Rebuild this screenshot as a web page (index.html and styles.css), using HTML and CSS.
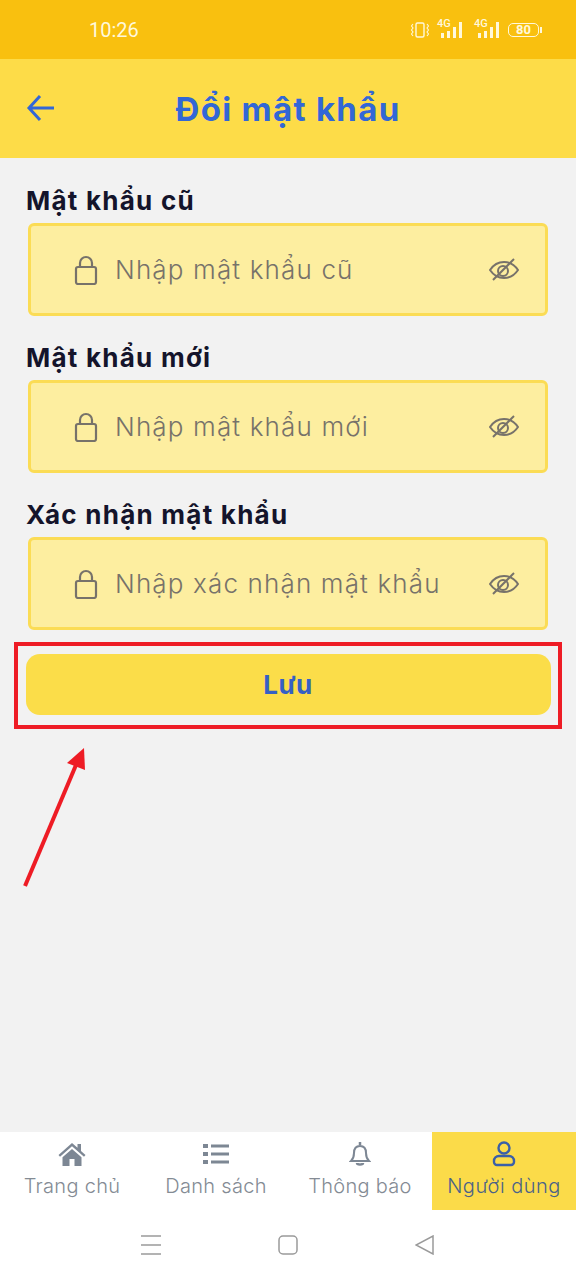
FILE: index.html
```html
<!DOCTYPE html>
<html lang="vi">

<head>
    <meta charset="UTF-8">
    <meta name="viewport" content="width=device-width, initial-scale=1.0">
    <title>Đổi mật khẩu</title>
    <link rel="stylesheet" href="styles.css">
</head>

<body>
    <div class="phone">
        <!-- Status bar -->
        <div class="status-bar">
            <span class="clock">10:26</span>
            <div class="status-icons">
                <svg class="vibrate" width="18" height="18" viewBox="0 0 18 18" fill="none" stroke="#fff8dc" stroke-width="1.4">
                    <rect x="5" y="2" width="8" height="14" rx="1.5"/>
                    <path d="M2 3L0.500 5 2 7 0.500 9 2 11 0.500 13 2 15M16 3l1.500 2L16 7l1.500 2L16 11l1.500 2L16 15" stroke-width="1.100"/>
                </svg>
                <div class="signal">
                    <span class="net">4G</span>
                    <svg width="21" height="18" viewBox="0 0 21 18" fill="#fff8dc">
                        <rect x="0" y="12" width="3" height="5"/>
                        <rect x="6" y="10" width="3" height="7"/>
                        <rect x="12" y="6" width="3" height="11"/>
                        <rect x="18" y="1" width="3" height="16"/>
                    </svg>
                </div>
                <div class="signal">
                    <span class="net">4G</span>
                    <svg width="21" height="18" viewBox="0 0 21 18" fill="#fff8dc">
                        <rect x="0" y="12" width="3" height="5"/>
                        <rect x="6" y="10" width="3" height="7"/>
                        <rect x="12" y="6" width="3" height="11"/>
                        <rect x="18" y="1" width="3" height="16"/>
                    </svg>
                </div>
                <div class="battery"><span>80</span></div>
            </div>
        </div>

        <!-- Header -->
        <header class="top-bar">
            <svg class="back" width="30" height="28" viewBox="0 0 30 28" fill="none" stroke="#3267d6" stroke-width="3">
                <path d="M28 14H3M14 2L3 14l11 12"/>
            </svg>
            <h1>Đổi mật khẩu</h1>
        </header>

        <!-- Form -->
        <main class="form">
            <div class="field">
                <label>Mật khẩu cũ</label>
                <div class="input-box">
                    <svg class="lock" width="24" height="30" viewBox="0 0 24 30" fill="none" stroke="#77726a" stroke-width="2.200">
                        <rect x="2" y="12" width="20" height="17" rx="2"/>
                        <path d="M6 12V8a6 6 0 0 1 12 0v4"/>
                    </svg>
                    <span class="placeholder">Nhập mật khẩu cũ</span>
                    <svg class="eye" width="30" height="26" viewBox="0 0 30 26" fill="none" stroke="#77726a" stroke-width="2">
                        <path d="M1 13c4-6 9-8 14-8s10 2 14 8c-4 6-9 8-14 8s-10-2-14-8z"/>
                        <circle cx="14" cy="14" r="5"/>
                        <path d="M25 2L4 23"/>
                    </svg>
                </div>
            </div>
            <div class="field">
                <label>Mật khẩu mới</label>
                <div class="input-box">
                    <svg class="lock" width="24" height="30" viewBox="0 0 24 30" fill="none" stroke="#77726a" stroke-width="2.200">
                        <rect x="2" y="12" width="20" height="17" rx="2"/>
                        <path d="M6 12V8a6 6 0 0 1 12 0v4"/>
                    </svg>
                    <span class="placeholder">Nhập mật khẩu mới</span>
                    <svg class="eye" width="30" height="26" viewBox="0 0 30 26" fill="none" stroke="#77726a" stroke-width="2">
                        <path d="M1 13c4-6 9-8 14-8s10 2 14 8c-4 6-9 8-14 8s-10-2-14-8z"/>
                        <circle cx="14" cy="14" r="5"/>
                        <path d="M25 2L4 23"/>
                    </svg>
                </div>
            </div>
            <div class="field">
                <label>Xác nhận mật khẩu</label>
                <div class="input-box">
                    <svg class="lock" width="24" height="30" viewBox="0 0 24 30" fill="none" stroke="#77726a" stroke-width="2.200">
                        <rect x="2" y="12" width="20" height="17" rx="2"/>
                        <path d="M6 12V8a6 6 0 0 1 12 0v4"/>
                    </svg>
                    <span class="placeholder">Nhập xác nhận mật khẩu</span>
                    <svg class="eye" width="30" height="26" viewBox="0 0 30 26" fill="none" stroke="#77726a" stroke-width="2">
                        <path d="M1 13c4-6 9-8 14-8s10 2 14 8c-4 6-9 8-14 8s-10-2-14-8z"/>
                        <circle cx="14" cy="14" r="5"/>
                        <path d="M25 2L4 23"/>
                    </svg>
                </div>
            </div>
            <button class="save">Lưu</button>
        </main>

        <!-- Annotation drawn over the screenshot -->
        <div class="mark-box"></div>
        <svg class="mark-arrow" width="70" height="146" viewBox="0 0 70 146" fill="none">
            <path d="M2 141L53 20" stroke="#ee1c25" stroke-width="4"/>
            <path d="M61 3L62 25L44 18z" fill="#ee1c25"/>
        </svg>

        <!-- Bottom navigation -->
        <nav class="tabs">
            <div class="tab">
                <svg width="28" height="26" viewBox="0 0 28 26" fill="#7d8794">
                    <path d="M14 2L0.500 14l1.500 1.700L14 5.200l12 10.500 1.500-1.700-4.500-4V3h-3.500v3.800z"/>
                    <path d="M14 8L4.500 16.300V25h7v-7h5v7h7v-8.700z"/>
                </svg>
                <span>Trang chủ</span>
            </div>
            <div class="tab">
                <svg width="26" height="22" viewBox="0 0 26 22" fill="#7d8794">
                    <rect x="0" y="1" width="5" height="4"/>
                    <rect x="8" y="1.500" width="18" height="3"/>
                    <rect x="0" y="9" width="5" height="4"/>
                    <rect x="8" y="9.500" width="18" height="3"/>
                    <rect x="0" y="17" width="5" height="4"/>
                    <rect x="8" y="17.500" width="18" height="3"/>
                </svg>
                <span>Danh sách</span>
            </div>
            <div class="tab">
                <svg width="22" height="26" viewBox="0 0 22 26" fill="none" stroke="#7d8794" stroke-width="2">
                    <path d="M2 20c2-2 3-4 3-8 0-4 2-7 6-7s6 3 6 7c0 4 1 6 3 8z"/>
                    <path d="M11 1v3M8 22c0 2 6 2 6 0" stroke-width="2.500"/>
                </svg>
                <span>Thông báo</span>
            </div>
            <div class="tab active">
                <svg width="24" height="26" viewBox="0 0 24 26" fill="none" stroke="#3a5fa8" stroke-width="2.400">
                    <circle cx="12" cy="7" r="5.500"/>
                    <path d="M7 15h10a5 5 0 0 1 5 5v1a3 3 0 0 1-3 3H5a3 3 0 0 1-3-3v-1a5 5 0 0 1 5-5z"/>
                </svg>
                <span>Người dùng</span>
            </div>
        </nav>

        <!-- Android soft keys -->
        <div class="soft-keys">
            <svg width="20" height="20" viewBox="0 0 20 20" stroke="#9a9a9a" stroke-width="1.500">
                <path d="M0 1h20M0 10h20M0 19h20"/>
            </svg>
            <svg width="20" height="20" viewBox="0 0 20 20" fill="none" stroke="#9a9a9a" stroke-width="1.500">
                <rect x="1" y="1" width="18" height="18" rx="4"/>
            </svg>
            <svg width="20" height="20" viewBox="0 0 20 20" fill="none" stroke="#9a9a9a" stroke-width="1.500">
                <path d="M18 1v18L1 10z"/>
            </svg>
        </div>
    </div>
</body>

</html>
```

FILE: styles.css
```css
body {
    margin: 0;
    padding: 0;
    background-color: #f2f2f2;
    font-family: 'Inter', 'Noto Sans', sans-serif;
}

.phone {
    position: relative;
    width: 576px;
    height: 1280px;
    display: flex;
    flex-direction: column;
    overflow: hidden;
}

/* Status bar */
.status-bar {
    height: 59px;
    flex-shrink: 0;
    background-color: #f9c00f;
    display: flex;
    align-items: center;
    justify-content: space-between;
    padding: 0 37px 0 89px;
    box-sizing: border-box;
    color: #fff8dc;
}
.clock {
    font-family: 'Roboto', sans-serif;
    font-size: 20px;
}
.status-icons {
    display: flex;
    align-items: center;
    gap: 9px;
}
.vibrate {
    margin-right: 3px;
}
.signal {
    position: relative;
    width: 21px;
    height: 18px;
}
.signal + .signal {
    margin-left: 7px;
}
.net {
    position: absolute;
    left: -4px;
    top: -2px;
    font-family: 'Roboto', sans-serif;
    font-size: 11px;
    font-weight: 500;
    line-height: 10px;
}
.battery {
    position: relative;
    width: 29px;
    height: 12px;
    box-sizing: content-box;
    border: 1.5px solid #fff8dc;
    border-radius: 5px;
    display: flex;
    align-items: center;
    justify-content: center;
    font-family: 'Roboto', sans-serif;
    font-size: 13px;
    font-weight: 700;
}
.battery::after {
    content: "";
    position: absolute;
    right: -4px;
    top: 3px;
    width: 2px;
    height: 6px;
    background-color: #fff8dc;
}

/* Header */
.top-bar {
    height: 99px;
    flex-shrink: 0;
    background-color: #fddc48;
    display: flex;
    align-items: center;
    justify-content: center;
    position: relative;
}
.top-bar h1 {
    margin: 0;
    font-size: 33px;
    font-weight: 700;
    letter-spacing: 1.3px;
    color: #3267d6;
}
.back {
    position: absolute;
    left: 26px;
    top: 35px;
}

/* Form */
.form {
    flex: 1;
    padding-top: 26px;
    display: flex;
    flex-direction: column;
    align-items: center;
}
.field {
    width: 524px;
    margin-bottom: 25px;
}
.field:nth-of-type(3) {
    margin-bottom: 24px;
}
.field label {
    display: block;
    height: 34px;
    line-height: 34px;
    margin-bottom: 5px;
    font-size: 26px;
    font-weight: 700;
    letter-spacing: 1.25px;
    color: #14142b;
}
.input-box {
    width: 520px;
    height: 93px;
    margin-left: 2px;
    box-sizing: border-box;
    background-color: #fdeea0;
    border: 3px solid #fbdc55;
    border-radius: 6px;
    display: flex;
    align-items: center;
    padding: 0 26px 0 43px;
}
.placeholder {
    flex: 1;
    margin-left: 17px;
    font-size: 26px;
    font-weight: 300;
    letter-spacing: 1.15px;
    color: #77726a;
}
.save {
    width: 525px;
    height: 61px;
    border: none;
    border-radius: 14px;
    background-color: #fbdd49;
    color: #3560c4;
    font-family: inherit;
    font-size: 26px;
    font-weight: 700;
    letter-spacing: 0.5px;
}

/* Annotation */
.mark-box {
    position: absolute;
    left: 14px;
    top: 642px;
    width: 548px;
    height: 87px;
    box-sizing: border-box;
    border: 4px solid #ee1c25;
}
.mark-arrow {
    position: absolute;
    left: 23px;
    top: 745px;
}

/* Bottom navigation */
.tabs {
    height: 78px;
    flex-shrink: 0;
    background-color: #fff;
    display: grid;
    grid-template-columns: repeat(4, 144px);
}
.tab {
    display: flex;
    flex-direction: column;
    align-items: center;
    padding-top: 9px;
    box-sizing: border-box;
    color: #848b94;
    font-size: 20px;
    font-weight: 300;
    letter-spacing: 0.3px;
}
.tab svg {
    height: 26px;
    margin-bottom: 7px;
}
.tab.active {
    background-color: #fbdb49;
    color: #4a6288;
    letter-spacing: 0.5px;
}

/* Soft keys */
.soft-keys {
    height: 70px;
    flex-shrink: 0;
    background-color: #fff;
    display: flex;
    align-items: flex-start;
    justify-content: center;
    gap: 117px;
    padding-top: 25px;
    box-sizing: border-box;
}
```
